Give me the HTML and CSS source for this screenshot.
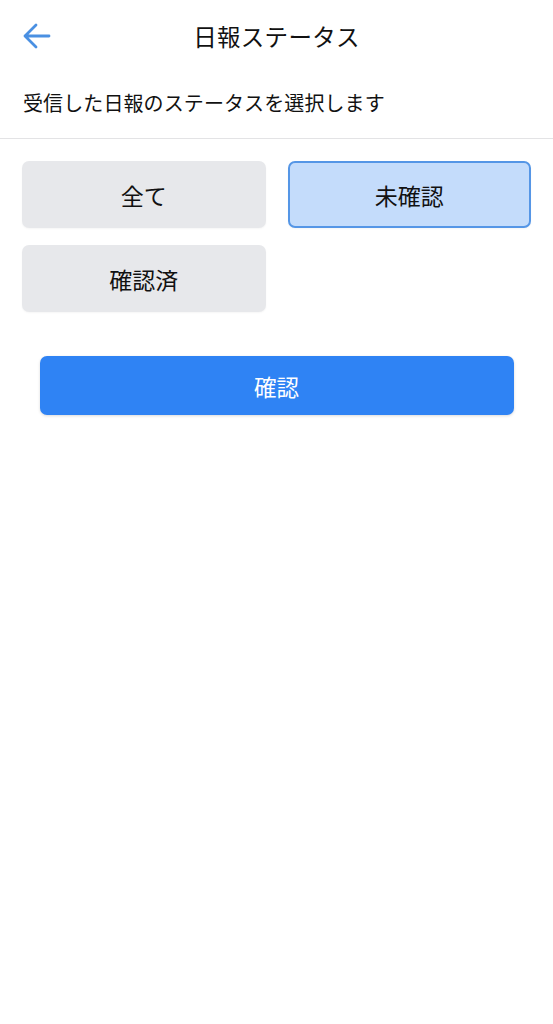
FILE: index.html
```html
<!DOCTYPE html>
<html lang="ja">
<head>
<meta charset="utf-8">
<link rel="stylesheet" href="styles.css">
</head>
<body>
<header class="header">
  <button class="back" aria-label="戻る">
    <svg width="30" height="30" viewBox="0 0 30 30"><path d="M27 15H3M14 4L3 15l11 11" fill="none" stroke="#4a90e2" stroke-width="2.8" stroke-linecap="round" stroke-linejoin="round"/></svg>
  </button>
  <h1 class="title">日報ステータス</h1>
</header>
<p class="desc">受信した日報のステータスを選択します</p>
<main class="content">
  <div class="options">
    <button class="opt">全て</button>
    <button class="opt selected">未確認</button>
    <button class="opt">確認済</button>
  </div>
  <button class="confirm">確認</button>
</main>
</body>
</html>
```
FILE: styles.css
```css
* { box-sizing: border-box; }
body {
  margin: 0;
  background: #fff;
  font-family: "Noto Sans CJK JP", "Noto Sans", sans-serif;
  color: #111;
}
.header {
  height: 74px;
  display: flex;
  align-items: center;
  justify-content: center;
  position: relative;
}
.back {
  position: absolute;
  left: 22px;
  top: 21px;
  padding: 0;
  border: 0;
  background: none;
  display: flex;
}
.title {
  margin: 0 0 2px;
  font-size: 23.5px;
  font-weight: 400;
  letter-spacing: 0.3px;
}
.desc {
  margin: 0;
  padding: 14px 23px 0;
  height: 65px;
  font-size: 20px;
  line-height: 30px;
  letter-spacing: 0.1px;
  border-bottom: 1.5px solid #e3e3e5;
}
.content {
  padding: 22px 22px;
}
.options {
  display: grid;
  grid-template-columns: 1fr 1fr;
  column-gap: 22px;
  row-gap: 17px;
}
.opt {
  height: 67px;
  border: 1.5px solid transparent;
  border-radius: 7px;
  background: #e7e8eb;
  font-family: inherit;
  font-size: 23px;
  color: #111;
  box-shadow: 0 1px 2px rgba(0,0,0,0.04);
}
.opt.selected {
  background: #c4dcfb;
  border: 2px solid #5596e6;
}
.confirm {
  display: block;
  width: 474px;
  height: 59px;
  margin: 44px auto 0;
  border: 0;
  border-radius: 7px;
  background: #2f83f4;
  color: #fff;
  font-family: inherit;
  font-size: 22.5px;
  box-shadow: 0 1px 3px rgba(0,0,0,0.15);
}
```
